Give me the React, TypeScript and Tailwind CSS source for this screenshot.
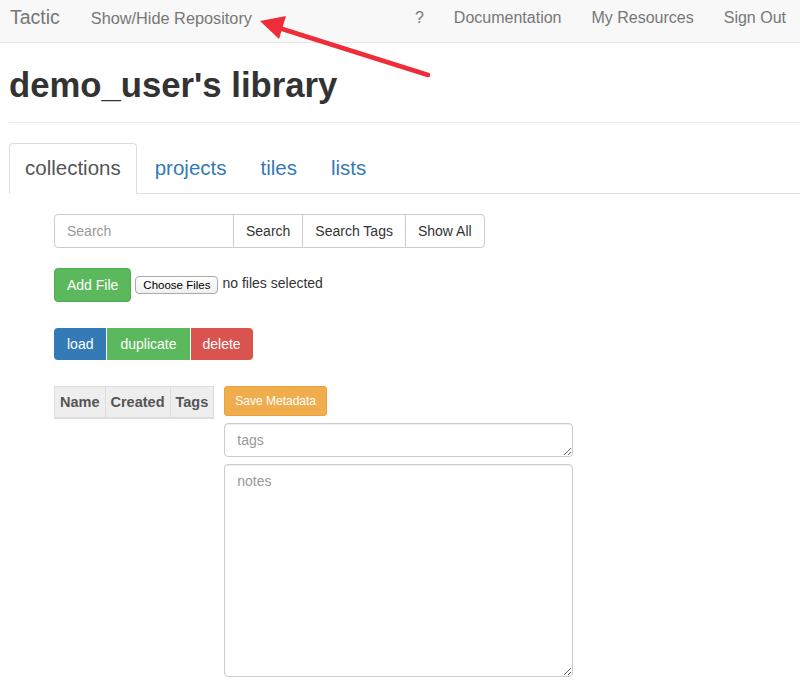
import { FunctionComponent } from "react";

const font = { fontFamily: '"Liberation Sans", Arial, sans-serif' };

const NavBar: FunctionComponent = () => {
  return (
    <nav className="flex h-[43px] items-start whitespace-nowrap bg-[#f8f8f8] border-b border-[#e7e7e7] text-[#777]">
      <a className="ml-[10px] mt-[7px] text-[19.5px] leading-[20px]">Tactic</a>
      <a className="ml-[31px] mt-[8px] text-[16.3px] leading-[20px]">Show/Hide Repository</a>
      <ul className="ml-auto mr-[14px] mt-[8px] flex gap-[30px] text-[16px] leading-[20px]">
        <li>?</li>
        <li>Documentation</li>
        <li>My Resources</li>
        <li>Sign Out</li>
      </ul>
    </nav>
  );
};

const Tabs: FunctionComponent = () => {
  return (
    <ul className="flex border-b border-[#ddd] text-[20.5px] leading-[28px]">
      <li className="-mb-px mr-[2px] rounded-t-[4px] border border-[#ddd] border-b-white bg-white px-[15px] py-[10px] text-[#555]">
        collections
      </li>
      <li className="mr-[2px] border border-transparent px-[15px] py-[10px] text-[#337ab7]">projects</li>
      <li className="mr-[2px] border border-transparent px-[15px] py-[10px] text-[#337ab7]">tiles</li>
      <li className="mr-[2px] border border-transparent px-[15px] py-[10px] text-[#337ab7]">lists</li>
    </ul>
  );
};

const Arrow: FunctionComponent = () => {
  return (
    <svg className="pointer-events-none absolute left-0 top-0" width="800" height="100" viewBox="0 0 800 100">
      <line x1="428" y1="75" x2="276" y2="27" stroke="#ee2d38" strokeWidth="4.5" strokeLinecap="round" />
      <polygon points="260,21 286,16 279,39" fill="#ee2d38" />
    </svg>
  );
};

export default function App() {
  return (
    <div className="relative min-h-[696px] bg-white text-[14px] text-[#333]" style={font}>
      <NavBar />
      <div className="pl-[9px]">
        <h1 className="mt-[22px] whitespace-nowrap text-[34.7px] font-bold leading-[40px] text-[#333]">demo_user's library</h1>
        <hr className="mt-[17px] border-t border-[#eee]" />
        <div className="mt-[20px]">
          <Tabs />
        </div>

        <div className="pl-[45px] pt-[20px]">
          <div className="flex h-[34px] whitespace-nowrap leading-[20px]">
            <input
              placeholder="Search"
              className="w-[180px] rounded-l-[4px] border border-[#ccc] px-[12px] text-[14px] text-[#555] placeholder:text-[#999] outline-none"
            />
            <button className="-ml-px border border-[#ccc] bg-white px-[12px] text-[#333]">Search</button>
            <button className="-ml-px border border-[#ccc] bg-white px-[12px] text-[#333]">Search Tags</button>
            <button className="-ml-px rounded-r-[4px] border border-[#ccc] bg-white px-[12px] text-[#333]">Show All</button>
          </div>

          <div className="mt-[20px] flex items-center whitespace-nowrap">
            <button className="h-[34px] rounded-[4px] border border-[#4cae4c] bg-[#5cb85c] px-[12px] text-white">Add File</button>
            <span className="ml-[4px] flex h-[18px] items-center rounded-[4px] border border-[#aaa] bg-gradient-to-b from-white to-[#f0f0f0] px-[7px] text-[11.5px] leading-[14px] text-black">
              Choose Files
            </span>
            <span className="mb-[4px] ml-[4px] text-[14px] leading-[20px] text-[#333]">no files selected</span>
          </div>

          <div className="mt-[26px] flex gap-px">
            <button className="h-[32px] rounded-l-[4px] bg-[#337ab7] px-[13px] text-white">load</button>
            <button className="h-[32px] bg-[#5cb85c] px-[13px] text-white">duplicate</button>
            <button className="h-[32px] rounded-r-[4px] bg-[#d9534f] px-[12px] text-white">delete</button>
          </div>

          <div className="mt-[26px] flex items-start">
            <table className="border-collapse bg-[#eee] text-[14.5px] leading-[20px] text-[#555]">
              <thead>
                <tr>
                  <th className="border border-b-2 border-[#ddd] p-[5px] text-left font-bold">Name</th>
                  <th className="border border-b-2 border-[#ddd] p-[5px] text-left font-bold">Created</th>
                  <th className="border border-b-2 border-[#ddd] p-[5px] text-left font-bold">Tags</th>
                </tr>
              </thead>
            </table>
            <div className="ml-[10px] flex w-[349px] flex-col items-start">
              <button className="h-[30px] rounded-[3px] border border-[#eea236] bg-[#f0ad4e] px-[10px] text-[12px] text-white">
                Save Metadata
              </button>
              <textarea
                placeholder="tags"
                className="mt-[7px] h-[34px] w-full rounded-[4px] border border-[#ccc] px-[12px] py-[6px] text-[14px] leading-[20px] text-[#555] placeholder:text-[#999] shadow-[inset_0_1px_1px_rgba(0,0,0,0.075)] outline-none"
              />
              <textarea
                placeholder="notes"
                className="mt-[7px] h-[213px] w-full rounded-[4px] border border-[#ccc] px-[12px] py-[6px] text-[14px] leading-[20px] text-[#555] placeholder:text-[#999] shadow-[inset_0_1px_1px_rgba(0,0,0,0.075)] outline-none"
              />
            </div>
          </div>
        </div>
      </div>
      <Arrow />
    </div>
  );
}
